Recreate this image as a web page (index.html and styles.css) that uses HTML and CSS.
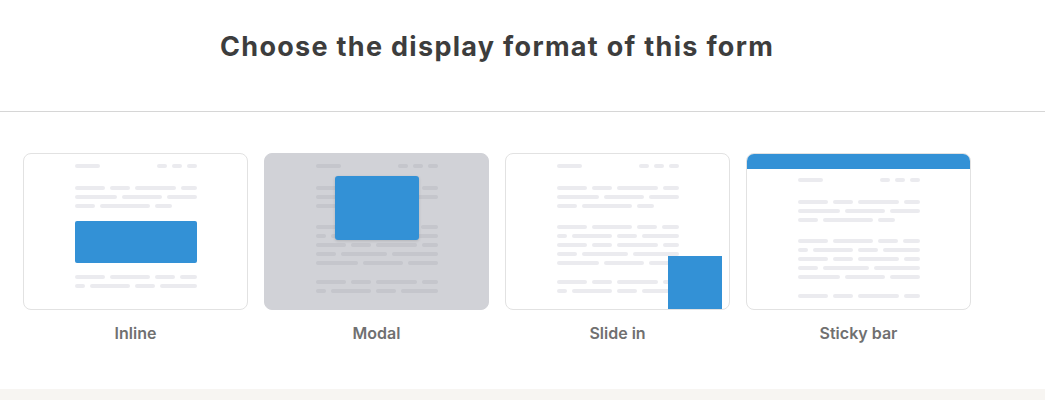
FILE: index.html
```html
<!DOCTYPE html>
<html>
<head>
	<title>Display format</title>
	<link rel="stylesheet" href="styles.css">
</head>
<body>
	<div class="header">
		<h1>Choose the display format of this form</h1>
	</div>

	<div class="formats">
		<!-- inline -->
		<div class="format">
			<div class="preview">
				<div class="sketch">
					<div class="sketch-head">
						<div class="bar w25"></div>
						<div class="row"><div class="bar w10"></div><div class="bar w10"></div><div class="bar w10"></div></div>
					</div>
					<div class="para">
						<div class="row"><div class="bar w30"></div><div class="bar w20"></div><div class="bar w41"></div><div class="bar w16"></div></div>
						<div class="row"><div class="bar w42"></div><div class="bar w40"></div><div class="bar w30"></div></div>
						<div class="row"><div class="bar w20"></div><div class="bar w50"></div><div class="bar w17"></div></div>
					</div>
					<div class="inline-block"></div>
					<div class="para">
						<div class="row"><div class="bar w30"></div><div class="bar w40"></div><div class="bar w20"></div><div class="bar w17"></div></div>
						<div class="row"><div class="bar w10"></div><div class="bar w40"></div><div class="bar w20"></div><div class="bar w37"></div></div>
					</div>
				</div>
			</div>
			<div class="label">Inline</div>
		</div>

		<!-- modal -->
		<div class="format">
			<div class="preview dimmed">
				<div class="sketch">
					<div class="sketch-head">
						<div class="bar w25"></div>
						<div class="row"><div class="bar w10"></div><div class="bar w10"></div><div class="bar w10"></div></div>
					</div>
					<div class="para">
						<div class="row"><div class="bar w30"></div><div class="bar w20"></div><div class="bar w41"></div><div class="bar w16"></div></div>
						<div class="row"><div class="bar w42"></div><div class="bar w40"></div><div class="bar w30"></div></div>
						<div class="row"><div class="bar w20"></div><div class="bar w50"></div><div class="bar w17"></div></div>
					</div>
					<div class="para">
						<div class="row"><div class="bar w30"></div><div class="bar w40"></div><div class="bar w20"></div><div class="bar w17"></div></div>
						<div class="row"><div class="bar w10"></div><div class="bar w40"></div><div class="bar w20"></div><div class="bar w37"></div></div>
						<div class="row"><div class="bar w30"></div><div class="bar w20"></div><div class="bar w41"></div><div class="bar w16"></div></div>
						<div class="row"><div class="bar w20"></div><div class="bar w46"></div><div class="bar w46"></div></div>
						<div class="row"><div class="bar w42"></div><div class="bar w40"></div><div class="bar w30"></div></div>
					</div>
					<div class="para tail">
						<div class="row"><div class="bar w30"></div><div class="bar w20"></div><div class="bar w41"></div><div class="bar w16"></div></div>
						<div class="row"><div class="bar w10"></div><div class="bar w40"></div><div class="bar w20"></div><div class="bar w37"></div></div>
					</div>
				</div>
				<div class="modal-block"></div>
			</div>
			<div class="label">Modal</div>
		</div>

		<!-- slide in -->
		<div class="format">
			<div class="preview">
				<div class="sketch">
					<div class="sketch-head">
						<div class="bar w25"></div>
						<div class="row"><div class="bar w10"></div><div class="bar w10"></div><div class="bar w10"></div></div>
					</div>
					<div class="para">
						<div class="row"><div class="bar w30"></div><div class="bar w20"></div><div class="bar w41"></div><div class="bar w16"></div></div>
						<div class="row"><div class="bar w42"></div><div class="bar w40"></div><div class="bar w30"></div></div>
						<div class="row"><div class="bar w20"></div><div class="bar w50"></div><div class="bar w17"></div></div>
					</div>
					<div class="para">
						<div class="row"><div class="bar w30"></div><div class="bar w40"></div><div class="bar w20"></div><div class="bar w17"></div></div>
						<div class="row"><div class="bar w10"></div><div class="bar w40"></div><div class="bar w20"></div><div class="bar w37"></div></div>
						<div class="row"><div class="bar w30"></div><div class="bar w20"></div><div class="bar w41"></div><div class="bar w16"></div></div>
						<div class="row"><div class="bar w20"></div><div class="bar w46"></div><div class="bar w46"></div></div>
						<div class="row"><div class="bar w42"></div><div class="bar w40"></div><div class="bar w30"></div></div>
					</div>
					<div class="para tail">
						<div class="row"><div class="bar w30"></div><div class="bar w20"></div><div class="bar w41"></div><div class="bar w16"></div></div>
						<div class="row"><div class="bar w10"></div><div class="bar w40"></div><div class="bar w20"></div><div class="bar w37"></div></div>
					</div>
				</div>
				<div class="slide-block"></div>
			</div>
			<div class="label">Slide in</div>
		</div>

		<!-- sticky bar -->
		<div class="format">
			<div class="preview">
				<div class="sticky"></div>
				<div class="sketch sketch-low">
					<div class="sketch-head">
						<div class="bar w25"></div>
						<div class="row"><div class="bar w10"></div><div class="bar w10"></div><div class="bar w10"></div></div>
					</div>
					<div class="para">
						<div class="row"><div class="bar w30"></div><div class="bar w20"></div><div class="bar w41"></div><div class="bar w16"></div></div>
						<div class="row"><div class="bar w42"></div><div class="bar w40"></div><div class="bar w30"></div></div>
						<div class="row"><div class="bar w20"></div><div class="bar w50"></div><div class="bar w17"></div></div>
					</div>
					<div class="para">
						<div class="row"><div class="bar w30"></div><div class="bar w40"></div><div class="bar w20"></div><div class="bar w17"></div></div>
						<div class="row"><div class="bar w10"></div><div class="bar w40"></div><div class="bar w20"></div><div class="bar w37"></div></div>
						<div class="row"><div class="bar w30"></div><div class="bar w20"></div><div class="bar w41"></div><div class="bar w16"></div></div>
						<div class="row"><div class="bar w20"></div><div class="bar w46"></div><div class="bar w46"></div></div>
						<div class="row"><div class="bar w42"></div><div class="bar w40"></div><div class="bar w30"></div></div>
					</div>
					<div class="para tail">
						<div class="row"><div class="bar w30"></div><div class="bar w20"></div><div class="bar w41"></div><div class="bar w16"></div></div>
					</div>
				</div>
			</div>
			<div class="label">Sticky bar</div>
		</div>
	</div>

	<div class="footer"></div>
</body>
</html>
```

FILE: styles.css
```css
body {
	margin: 0;
	font-family: Inter, "Noto Sans", sans-serif;
	background-color: #ffffff;
}
.header {
	height: 112px;
	box-sizing: border-box;
	padding: 31px 0 0 220px;
	border-bottom: 1px solid #d6d6d6;
}
.header h1 {
	margin: 0;
	font-size: 27px;
	line-height: 32px;
	font-weight: 700;
	letter-spacing: 1.3px;
	color: #3d3d3d;
}
.formats {
	display: flex;
	gap: 16px;
	padding: 41px 0 47px 23px;
}
.format {
	width: 225px;
}
.preview {
	position: relative;
	height: 157px;
	box-sizing: border-box;
	border: 1px solid #e2e2e2;
	border-radius: 8px;
	overflow: hidden;
	background-color: #ffffff;
}
.preview.dimmed {
	background-color: #d1d2d7;
	border-color: #d1d2d7;
}
.label {
	margin-top: 14px;
	text-align: center;
	font-size: 16px;
	line-height: 18px;
	font-weight: 600;
	color: #707070;
}
.footer {
	height: 11px;
	background-color: #f7f5f2;
}

/* little page sketch inside each card */
.sketch {
	width: 122px;
	margin: 0 auto;
	padding-top: 10px;
	display: flex;
	flex-direction: column;
}
.sketch-low {
	padding-top: 9px;
}
.sketch-head {
	display: flex;
	justify-content: space-between;
	margin-bottom: 18px;
}
.para {
	display: flex;
	flex-direction: column;
	gap: 5px;
}
.para + .para {
	margin-top: 17px;
}
.para.tail {
	margin-top: 15px;
}
.row {
	display: flex;
	gap: 5px;
}
.bar {
	height: 4px;
	border-radius: 2px;
	background-color: #ebebef;
}
.dimmed .bar {
	background-color: #c5c6cc;
}
.w10 { width: 10px; }
.w16 { width: 16px; }
.w17 { width: 17px; }
.w20 { width: 20px; }
.w25 { width: 25px; }
.w30 { width: 30px; }
.w37 { width: 37px; }
.w40 { width: 40px; }
.w41 { width: 41px; }
.w42 { width: 42px; }
.w46 { width: 46px; }
.w50 { width: 50px; }

/* the blue form shapes */
.inline-block {
	height: 42px;
	margin: 13px 0 12px;
	border-radius: 2px;
	background-color: #3391d6;
}
.modal-block {
	position: absolute;
	top: 22px;
	left: 70px;
	width: 84px;
	height: 64px;
	border-radius: 3px;
	background-color: #3391d6;
	box-shadow: 0 1px 3px rgba(0, 0, 0, 0.15);
}
.slide-block {
	position: absolute;
	right: 7px;
	bottom: 0;
	width: 54px;
	height: 53px;
	background-color: #3391d6;
}
.sticky {
	height: 15px;
	background-color: #3391d6;
}
```
